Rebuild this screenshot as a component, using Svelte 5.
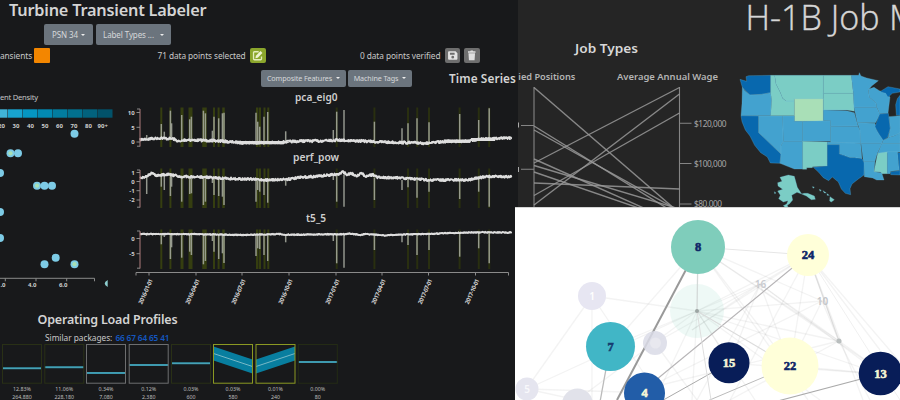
<script>
  // Deterministic jitter keeps the traces stable between renders.
  let seed = 7;
  function rand() {
    seed = (seed * 16807) % 2147483647;
    return seed / 2147483647 - 0.5;
  }
  function trace(points, noise) {
    const out = [];
    let k = 0;
    for (let x = 140; x <= 512; x += 0.7) {
      while (k < points.length - 2 && x > points[k + 1][0]) k++;
      const [x0, y0] = points[k];
      const [x1, y1] = points[k + 1];
      const y = y0 + ((x - x0) / (x1 - x0)) * (y1 - y0) + rand() * noise;
      out.push(`${x.toFixed(1)},${y.toFixed(2)}`);
    }
    return out.join(' ');
  }

  const bands = [
    [161.3, 2], [170.4, 2], [182, 3], [190.5, 4], [204.5, 4.5], [214, 2], [218.6, 2], [223.5, 2.5],
    [257.2, 2.5], [260, 2], [264.5, 2], [268.3, 2],
    [336.7, 2], [374.4, 2], [408, 2], [417.2, 2], [429, 2], [459.6, 2], [478.8, 2], [489.2, 2]
  ];
  const spikeX = [
    146.7, 161.3, 164.3, 170.4, 171.6, 181.7, 189.7, 191.4, 203.4, 205.4, 212.4, 214, 218.7, 222.4, 224,
    256, 257.7, 259.7, 264, 267.7, 285.7, 333.3, 336.7, 344, 374.4, 402, 408, 417, 429, 459.7, 478.7, 489.2
  ];
  const charts = [
    {
      name: 'pca_eig0', titleX: 295, titleY: 100.5, titleW: 42.5, top: 107.5, bottom: 147,
      ticks: [['10', 112.5], ['5', 127.3], ['0', 142]],
      base: [[140, 139.5], [147, 139], [160, 138], [174, 139], [180, 142], [184, 140], [190, 140], [220, 141], [240, 142.6], [275, 142.6], [300, 141], [320, 141], [337, 140], [360, 141], [380, 142], [400, 142.5], [430, 143.2], [445, 141.5], [470, 141], [480, 139], [512, 138]],
      ends: [135, 124, 131.7, 110.7, 123.3, 115, 119.3, 116.7, 110.7, 113.3, 130.7, 116.7, 118.3, 113.3, 112.7, 112.7, 121.7, 126.7, 116.7, 112, 131.3, 130, 111.7, 110, 121.7, 128.3, 123.3, 118.3, 122.3, 114, 120, 108.3],
      noise: 2.6, thick: true
    },
    {
      name: 'perf_pow', titleX: 293, titleY: 161.3, titleW: 46, top: 168.5, bottom: 208,
      ticks: [['1', 172.5], ['0', 181.5], ['-1', 190.7], ['-2', 200]],
      base: [[140, 178], [147, 176], [152, 172.8], [156, 176], [168, 174], [180, 176.5], [200, 177], [230, 178.5], [270, 180], [290, 179], [300, 177.5], [320, 176], [340, 174], [343, 171.5], [347, 175], [351, 173], [356, 176], [361, 173.5], [366, 176], [373, 174.5], [378, 177.5], [400, 178], [430, 180], [468, 180], [475, 178], [490, 176.5], [512, 176.5]],
      ends: [194, 186.7, 190, 196, 186.7, 201.7, 194, 193.3, 205, 201.7, 183, 195, 196, 196.7, 205, 201.7, 190, 191.7, 195, 202.7, 185.7, 180, 201.7, 206.7, 200, 190, 187.3, 197.7, 191.7, 199, 191.7, 206.7],
      noise: 2.5
    },
    {
      name: 't5_5', titleX: 306, titleY: 222, titleW: 20, top: 229.5, bottom: 269,
      ticks: [['0', 238.5], ['-5', 253.7]],
      base: [[140, 234], [200, 234.2], [240, 235], [280, 234], [287, 234.8], [320, 234.3], [345, 234.2], [350, 233.5], [360, 235], [366, 234], [385, 235.5], [400, 234.5], [430, 234], [450, 233], [480, 232.3], [512, 232.5]],
      ends: [236, 244.3, 237, 259, 247.3, 257.7, 251.7, 255, 264.3, 261, 241, 251.7, 259, 253.3, 263, 256, 248.3, 249, 255, 261, 242.3, 241, 263.3, 267.7, 250, 242.3, 245, 255, 250, 256.7, 248.3, 263.3],
      noise: 1.1
    }
  ].map((c) => ({ ...c, line: trace(c.base, c.noise), line2: trace(c.base, c.noise) }));

  const dates = [
    [149, '2016-01-01'], [196, '2016-04-01'], [242, '2016-07-01'], [289, '2016-10-01'],
    [336, '2017-01-01'], [382, '2017-04-01'], [428.5, '2017-07-01'], [475.5, '2017-10-01']
  ];
  const density = ['#40b4d8', '#18a3cf', '#0596c2', '#0289b2', '#027c9f', '#02708e', '#02627d', '#02526a'];
  const dots = [
    [74.5, 133.7, 0], [10.5, 153.3, 1], [18, 153.3, 0], [0, 173, 0], [37, 185.7, 1], [44.5, 185.7, 0], [52, 185.7, 0],
    [0, 212, 0], [0, 238, 0], [55.7, 257.7, 0], [44.5, 264.2, 0], [74.5, 264.2, 1]
  ];
  const profiles = [
    { x: 2.5, y: 368.3, edge: '#293016', pct: '12.83%', n: '264,880' },
    { x: 44.8, y: 367.2, edge: '#293016', pct: '11.06%', n: '228,180' },
    { x: 86.5, y: 372.9, edge: '#6d6e6f', pct: '0.34%', n: '7,080' },
    { x: 129.2, y: 365, edge: '#6d6e6f', pct: '0.12%', n: '2,380' },
    { x: 171.5, y: 363.3, edge: '#293016', pct: '0.03%', n: '600' },
    { x: 213.5, dir: 1, edge: '#8b9922', pct: '0.03%', n: '580' },
    { x: 256, dir: -1, edge: '#8b9922', pct: '0.01%', n: '240' },
    { x: 298.3, y: 362, edge: '#242b15', pct: '0.00%', n: '80' }
  ];

  const jobs = [
    [87.5, 213], [126, 216], [130, 211], [159, 224], [163, 87.5], [165.5, 209], [172, 222], [183, 189], [195.5, 113], [205, 94]
  ];

  const D = '#0868ae', M = '#43a2cf', G = '#7bcdc5', L = '#a9dfb7';
  const states = [
    [D, '30,238 50,244 48,230 56,227 122,226 122,278 95,283 60,285 45,270 37,262'],
    [M, '37,262 45,272 60,285 95,283 122,278 125,300 122,347 33,347 36,310'],
    [D, '33,347 86,348 86,398 153,462 150,490 121,489 112,471 92,458 74,436 60,408 46,390 36,365'],
    [M, '86,348 158,348 160,425 153,437 153,462 86,398'],
    [G, '122,226 134,226 138,252 150,275 158,295 168,303 193,303 193,347 122,347 125,300 122,278'],
    [G, '134,226 280,226 280,298 193,298 193,303 168,303 158,295 150,275 138,252'],
    [L, '193,296 280,296 280,364 193,364'],
    [M, '158,348 193,348 193,364 218,364 218,424 160,424'],
    [M, '218,364 302,362 302,424 218,424'],
    [M, '160,424 218,424 218,507 193,507 150,490 153,462 153,437'],
    [G, '218,424 292,426 292,498 248,500 247,503 230,503 230,508 218,508'],
    [G, '280,226 364,226 370,280 280,280'],
    [G, '280,280 370,280 373,334 350,330 280,330'],
    [M, '280,330 350,332 373,338 384,378 302,379 302,362 280,362'],
    [M, '302,379 384,379 392,395 392,430 302,428'],
    [M, '292,426 392,430 396,476 374,473 360,473 340,466 328,462 328,434 292,434'],
    [D, '292,434 328,434 328,462 340,466 360,473 374,473 396,476 404,490 402,525 385,537 366,552 360,566 362,584 346,580 334,567 325,546 307,531 296,542 280,533 266,517 250,502 292,498'],
    [M, '364,226 386,226 388,218 393,228 410,234 445,242 425,258 415,270 418,292 438,308 440,322 372,322 370,280'],
    [M, '372,322 440,322 450,343 437,368 382,368'],
    [M, '382,368 435,370 440,390 460,420 455,430 392,430 390,392'],
    [M, '393,430 456,430 442,460 435,484 400,484'],
    [M, '402,484 435,484 432,515 455,518 462,540 440,540 428,534 403,530'],
    [M, '415,268 432,262 448,272 470,280 480,292 474,340 449,341 440,320 438,308 418,292'],
    [D, '450,275 474,260 510,267 510,276 487,280 474,292 467,280'],
    [D, '449,342 475,340 481,385 473,412 460,421 447,402 435,380'],
    [M, '477,350 510,347 510,400 494,407 474,413 481,385'],
    [M, '460,421 474,413 494,407 510,398 510,431 455,431'],
    [M, '455,431 510,431 510,456 443,460'],
    [G, '443,460 472,455 472,521 456,521 452,516 432,515 438,484'],
    [M, '472,455 503,455 508,511 482,514 480,521 472,521'],
    [D, '503,458 510,458 510,525 482,524 482,515 508,512'],
    [D, '510,286 502,296 497,314 499,346 510,346'],
    [G, '150,532 175,525 193,529 202,562 215,582 201,577 185,586 188,600 178,612 168,617 174,602 160,606 146,596 151,586 143,573 158,568 144,558 143,548 156,544'],
    [G, '215,582 222,580 233,580 253,588 256,598 244,599 229,588'], [G, '300,590 313,599 304,606 299,603'],
    [G, '268,568 274,571 270,574'], [G, '279,572 289,579 283,579'], [G, '291,581 298,586 291,586'],
    [G, '247,560 253,561 250,565'], [G, '160,617 170,612 174,620 166,622'], [G, '133,575 138,579 134,581']
  ];

  const hub = [697, 311];
  const faint = [
    [592, 296, 697, 311], [592, 296, 527, 388], [592, 296, 592, 400], [592, 296, 655, 390], [527, 389, 697, 311],
    [527, 389, 655, 393], [577, 400, 697, 311], [655, 343, 760, 284], [698, 247, 822, 301], [698, 247, 839, 341],
    [698, 247, 885, 374], [698, 247, 790, 366], [698, 247, 808, 400], [698, 247, 615, 342], [760, 284, 808, 255],
    [760, 284, 839, 341], [760, 284, 880, 374], [760, 284, 790, 365], [760, 284, 730, 363], [822, 301, 839, 341],
    [822, 301, 790, 366], [822, 301, 697, 311], [839, 341, 885, 374], [839, 341, 697, 311], [697, 311, 760, 284],
    [697, 311, 808, 255], [697, 311, 790, 366], [697, 311, 880, 374], [697, 311, 730, 363], [697, 311, 692, 400],
    [697, 311, 655, 400], [697, 311, 820, 400], [697, 311, 610, 347], [697, 311, 755, 400], [808, 255, 790, 366],
    [808, 255, 730, 400], [808, 255, 863, 400], [808, 255, 880, 350], [790, 366, 880, 374], [839, 341, 730, 400],
    [839, 341, 870, 400], [822, 301, 645, 389], [760, 284, 697, 400], [839, 341, 645, 389], [729, 363, 880, 374],
    [808, 255, 692, 330], [808, 255, 900, 362], [760, 284, 692, 330], [527, 389, 577, 400], [655, 343, 697, 400]
  ];
  const strong = [
    [698, 247, 617, 400, 2, '#999'], [808, 255, 645, 389, 1.1, '#b6b4b6'], [880, 374, 774, 402, 1.1, '#aaa'],
    [790, 366, 705, 402, 1, '#bbb'], [729, 363, 658, 403, 1, '#aaa'], [610, 347, 600, 402, 1.3, '#bbb'],
    [808, 255, 839, 341, 1.3, '#ddd'], [698, 247, 697, 311, 1.3, '#d4d9d8'], [698, 247, 808, 255, 1, '#e6e6e6'],
    [697, 311, 711, 400, 1, '#dedede'], [697, 311, 790, 366, 1, '#dadada'], [808, 255, 900, 400, 1, '#f0f0f0']
  ];
  const nodes = [
    [698, 247, 27, '#7fcdbb', '#102868', '8'], [808, 255, 21, '#ffffd9', '#102868', '24'],
    [610.5, 346.5, 24.5, '#41b6c6', '#163c70', '7'], [644.5, 393, 20.5, '#225da8', '#f5f5d5', '4'],
    [729, 362.7, 20.5, '#081d58', '#f5f5d5', '15'], [790, 366, 28.5, '#ffffd9', '#102868', '22'],
    [880.5, 373.5, 21.8, '#081d58', '#f5f5d5', '13']
  ];
</script>

<div class="collage">
  <section class="labeler">
    <h1>Turbine Transient Labeler</h1>
    <div class="row selects">
      <button style:width="49px">PSN 34 <i class="caret"></i></button>
      <button style:width="75px">Label Types ... <i class="caret wide"></i></button>
    </div>
    <div class="row status">
      <span class="transients">ansients</span><b class="swatch"></b>
      <span class="selected">71 data points selected</span>
      <b class="icon green"><svg viewBox="0 0 16 16"><path d="M9 4H4.5Q3.5 4 3.5 5v6.5q0 1 1 1H11q1 0 1-1V9" fill="none" stroke="#e5edbd" stroke-width="1.4" /><path d="M6 8.3l5-5 2 2-5 5-2.5.5z" fill="#eef3d3" /></svg></b>
      <span class="verified">0 data points verified</span>
      <b class="icon"><svg viewBox="0 0 16 16"><path fill-rule="evenodd" d="M4 3.5h7l2 2v6q0 1-1 1H4q-1 0-1-1v-7q0-1 1-1zM5 5v2.3h5V5zM8 8.3a1.5 1.5 0 100 3 1.5 1.5 0 000-3z" fill="#e4e4e4" /></svg></b>
      <b class="icon trash"><svg viewBox="0 0 16 16"><path d="M4 3.500h2.300l.7-.8h2l.7.8H12V5H4zM4.500 5.600h7L11 13H5z" fill="#e0e0e0" /></svg></b>
    </div>
    <div class="row features">
      <button style:width="85px">Composite Features <i class="caret"></i></button>
      <button style:width="64px">Machine Tags <i class="caret"></i></button>
      <h2>Time Series</h2>
    </div>
    <svg class="series" viewBox="0 90 515 220" width="515" height="220">
      <text x="0" y="99.500" font-size="7.600" textLength="38" fill="#c4c4c4">ent Density</text>
      {#each density as c, i}
        <rect x={-7 + i * 15} y="109.300" width="14.500" height="8.400" fill={c} />
        <text x={i === 7 ? 102.7 : 1.5 + i * 14.5} y="127.500" class="tiny" text-anchor="middle">{(i + 2) * 10}{i === 7 ? '+' : ''}</text>
      {/each}
      {#each dots as [x, y, hot]}
        <circle cx={x} cy={y} r="4" fill="#7dcbe6" />
        {#if hot}<circle cx={x} cy={y} r="2.100" fill="#a9e0b4" />{/if}
      {/each}
      <path d="M107.700 280q-6 3.500 0 7z" fill="#8ecfd0" />
      <path d="M0 278.300H94.500v3M5.300 278.300v3M36 278.300v3M66.700 278.300v3" class="axis" />
      {#each [[5.5, '.0'], [36.5, '4.0'], [67.5, '6.0']] as [x, t]}
        <text {x} y="286.500" class="tiny" text-anchor="end">{t}</text>
      {/each}
      {#each charts as c}
        {#each bands as [x, w], i}
          <rect x={x - w / 2} y={c.top} width={w} height={c.bottom - c.top} fill={i < 12 ? '#353e10' : '#292f10'} />
        {/each}
        {#each spikeX as x, i}
          <line x1={x} x2={x} y1={c.ends[i]} y2={c.base.find((p) => p[0] >= x)[1]} stroke="#a9ada2" stroke-width="1.500" opacity=".85" />
        {/each}
        <polyline points={c.line} fill="none" stroke="#dedede" stroke-width="1.800" stroke-linejoin="round" />
        <polyline points={c.line2} fill="none" stroke="#dedede" stroke-width="1.300" stroke-linejoin="round" />
        {#if c.thick}
          <path d="M240 142.600H284M445 141.200H470M471 139.500H495" stroke="#dedede" stroke-width="3.200" />
        {/if}
        <path d="M140 {c.top + 1.5}V{c.bottom - .5}" stroke="#a47575" stroke-width="1.100" />
        <path d="M137 {c.top + 1.5}h3M137 {c.bottom - .8}h3" class="axis" />
        {#each c.ticks as [t, y]}
          <path d="M136.500 {y}h3.500" class="axis" />
          <text x="134.700" y={y + 2.2} class="tiny" text-anchor="end">{t}</text>
        {/each}
        <text x={c.titleX} y={c.titleY} font-size="9.800" font-weight="600" textLength={c.titleW} lengthAdjust="spacingAndGlyphs" fill="#cfcfcf">{c.name}</text>
      {/each}
      <path d="M136 275.500v-3H508.500v3" class="axis" />
      {#each dates as [x, t]}
        <path d="M{x} 272.500v3" class="axis" />
        <text transform="translate({x + 4} 280) rotate(-66)" class="tiny" text-anchor="end" textLength="27">{t}</text>
      {/each}
    </svg>
    <h2 class="load">Operating Load Profiles</h2>
    <p>Similar packages: <a href="#packages">66 67 64 65 41</a></p>
    <svg class="profiles" viewBox="0 343 515 57" width="515" height="57">
      {#each profiles as p}
        {#if p.dir}
          {@const a = p.dir === 1 ? 353.5 : 366.5}
          {@const b = p.dir === 1 ? 366.5 : 353.5}
          <polygon points="{p.x},{a - 7} {p.x + 39},{b - 7} {p.x + 39},{b + 7} {p.x},{a + 7}" fill="#087e9f" />
          <line x1={p.x} y1={a} x2={p.x + 39} y2={b} stroke="#77b8c6" />
        {:else}
          <line x1={p.x} x2={p.x + 39} y1={p.y} y2={p.y} stroke="#2d8fa6" stroke-width="2" />
          <line x1={p.x} x2={p.x + 39} y1={p.y} y2={p.y} stroke="#5eb0c2" stroke-width=".7" />
        {/if}
        <rect x={p.x} y="344.500" width="39" height="38.700" fill="none" stroke={p.edge} />
        <text x={p.x + 19.5} y="390.700" font-size="5.300" text-anchor="middle" fill="#bdbdbd">{p.pct}</text>
        <text x={p.x + 19.5} y="398.700" font-size="5.300" text-anchor="middle" fill="#bdbdbd">{p.n}</text>
      {/each}
    </svg>
  </section>

  <div class="side">
    <section class="jobs">
      <svg viewBox="518 0 382 207" width="382" height="207">
        <text x="575" y="53" font-size="12.300" font-weight="600" textLength="63" lengthAdjust="spacingAndGlyphs" fill="#d8d8d8">Job Types</text>
        <text x="518.300" y="80" font-size="9.300" font-weight="600" textLength="57" lengthAdjust="spacingAndGlyphs" fill="#b4b4b4">ied Positions</text>
        <text x="617" y="80" font-size="9.300" font-weight="600" textLength="101" lengthAdjust="spacingAndGlyphs" fill="#b4b4b4">Average Annual Wage</text>
        <g fill="none" stroke="#999" stroke-width="1.100">
          <path d="M534 87V207M679.500 87V207" stroke="#858585" />
          {#each jobs as [a, b]}<line x1="534" y1={a} x2="679.500" y2={b} stroke-width="1.400" opacity=".85" />{/each}
          <path d="M521 125.500h13M521 169.300h13M679.500 123.300h12M679.500 163.500h12M679.500 204h12" stroke="#858585" />
        </g>
        {#each [[126.5, '$120,000'], [166.7, '$100,000'], [206.5, '$80,000']] as [y, t]}
          <text x="694" {y} font-size="8.300" textLength={t.length === 8 ? 32.5 : 28} fill="#a5a5a5">{t}</text>
        {/each}
        <path d="M518.500 122.500v5M518.500 167v5" stroke="#aaa" />
        <text x="745.500" y="30.300" font-size="35" class="headline" textLength="134" lengthAdjust="spacingAndGlyphs">H-1B Job</text>
        <text x="889" y="30.300" font-size="35" class="headline">M</text>
        <g transform="translate(730 0) scale(.33333)" stroke="#70b9d6" stroke-width="1.500" stroke-opacity=".55" stroke-linejoin="round">
          {#each states as [fill, points]}<polygon {fill} {points} />{/each}
        </g>
      </svg>
    </section>
    <section class="network">
      <svg viewBox="515 208 385 192" width="385" height="192">
        {#each faint as [x1, y1, x2, y2]}<line {x1} {y1} {x2} {y2} stroke="#777" stroke-opacity=".09" stroke-width="1.300" />{/each}
        <circle cx={hub[0]} cy={hub[1]} r="27" fill="#7fcdbb" opacity=".13" />
        {#each strong as [x1, y1, x2, y2, w, c]}<line {x1} {y1} {x2} {y2} stroke={c} stroke-width={w} />{/each}
        <circle cx="697" cy="311" r="2" fill="#9ca5a3" />
        <circle cx="839" cy="341" r="2.500" fill="#b9bebe" />
        <g class="ghost">
          <circle cx="592" cy="296" r="14" fill="#e7e6f2" /><text x="592" y="299.500" fill="#fff">1</text>
          <circle cx="527" cy="389" r="11.500" fill="#e5e5ef" /><text x="527" y="392.500" fill="#f8f8fb">5</text>
          <circle cx="577.500" cy="404" r="15.500" fill="#e1e2ea" />
          <circle cx="655" cy="343" r="12" fill="#d9dae6" opacity=".85" /><circle cx="655.500" cy="343" r="5.500" fill="#e9e9f0" opacity=".9" />
          <text x="760.500" y="287.500" fill="#c9cbd0">16</text>
          <text x="822.500" y="305" fill="#c4c6c9">10</text>
        </g>
        {#each nodes as [x, y, r, fill, ink, label]}
          <circle cx={x} cy={y} {r} {fill} />
          <text {x} y={y + 4.3} class="node" fill={ink} stroke={ink}>{label}</text>
        {/each}
      </svg>
    </section>
  </div>
</div>

<style>
  :global(body) { margin: 0; background: #18191b; }
  .collage { width: 900px; height: 400px; display: flex; overflow: hidden; background: #18191b; font-family: "Noto Sans", "Open Sans", sans-serif; color: #d4d4d4; }
  .labeler { width: 518px; margin-right: -3px; height: 400px; flex: none; display: flex; flex-direction: column; }
  svg { display: block; flex: none; }
  h1, h2, p { margin: 0; white-space: nowrap; }
  h1 { height: 24px; padding-left: 9px; font-size: 16.300px; line-height: 20px; font-weight: 600; letter-spacing: -.21px; }
  .row { display: flex; flex: none; align-items: center; white-space: nowrap; }
  .selects { height: 21px; padding-left: 44px; gap: 3px; }
  button { height: 100%; padding: 0; border: 0; border-radius: 2px; background: #6b747d; color: #d6d8da; font-family: inherit; font-size: 8px; line-height: 1; letter-spacing: -.1px; flex: none; display: flex; align-items: center; justify-content: center; gap: 3px; white-space: nowrap; }
  .caret { border: 2px solid transparent; border-top-color: #eee; border-bottom: 0; }
  .caret.wide { margin-left: 3px; }
  .status { height: 15px; margin-top: 3px; font-size: 8.300px; color: #c8c8c8; }
  .status span { flex: none; letter-spacing: -.08px; }
  .transients { width: 34px; }
  .swatch { width: 16px; height: 15px; border-radius: 1px; background: #f38600; flex: none; }
  .selected { margin-left: 107.500px; width: 92.500px; }
  .icon { width: 15.500px; height: 15px; border-radius: 2px; background: #6e6e6e; flex: none; }
  .icon svg { width: 15.500px; height: 15px; }
  .green { background: #8ba62c; }
  .verified { margin-left: 94.500px; width: 84.500px; }
  .trash { margin-left: 4px; }
  .features { height: 17.500px; margin-top: 6.500px; padding-left: 261px; gap: 2px; }
  .features button { font-size: 7.200px; letter-spacing: -.12px; gap: 4px; }
  .features h2 { font-size: 11.800px; font-weight: 600; line-height: 17px; margin-left: 35px; letter-spacing: .1px; }
  .series { margin-top: 3px; }
  .axis { fill: none; stroke: #8a8a8a; stroke-width: 1; }
  .tiny { font-size: 6px; font-weight: 700; fill: #cfcfcf; }
  .load { height: 21px; padding-left: 37.500px; font-size: 12.500px; line-height: 19px; font-weight: 600; letter-spacing: -.17px; }
  p { height: 12px; padding-left: 45px; font-size: 8.300px; line-height: 14px; letter-spacing: -.03px; color: #c8c8c8; }
  a { color: #1457c0; text-decoration: none; margin-left: 1px; font-weight: 600; letter-spacing: -.15px; }
  .side { width: 385px; display: flex; flex-direction: column; flex: none; }
  .jobs { height: 207px; padding-left: 3px; background: linear-gradient(90deg, transparent 3px, #252525 3px); }
  .network { height: 192px; border-top: 1px solid #d5d5d5; background: #fff; z-index: 2; }
  .headline { font-family: "Open Sans", "Noto Sans", sans-serif; font-weight: 300; fill: #d6d6d6; stroke: #d6d6d6; stroke-width: .4px; }
  .ghost { font-size: 10px; font-weight: 600; text-anchor: middle; }
  .node { font-family: "Liberation Serif", serif; font-size: 12.500px; font-weight: 700; text-anchor: middle; stroke-width: .6px; }
</style>
